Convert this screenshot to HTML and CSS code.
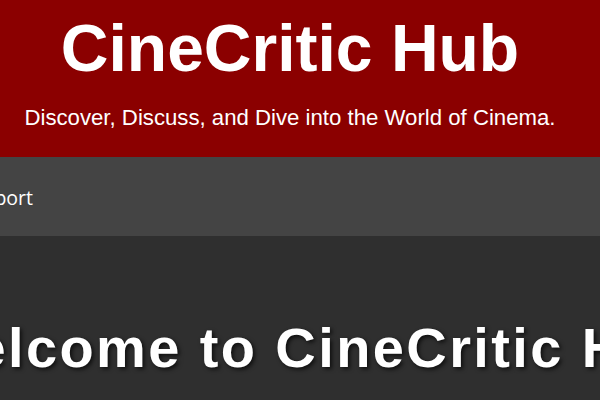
FILE: index.html
```html
<!DOCTYPE html>
<html lang="en">
<head>
<meta charset="utf-8">
<title>CineCritic Hub</title>
<link rel="stylesheet" href="styles.css">
</head>
<body>
<header class="site-header">
  <h1 class="site-title">CineCritic Hub</h1>
  <p class="site-tagline">Discover, Discuss, and Dive into the World of Cinema.</p>
</header>
<nav class="site-nav">
  <ul class="nav-list">
    <li><a class="nav-link" href="#">Home</a></li>
    <li><a class="nav-link" href="#">Reviews</a></li>
    <li><a class="nav-link" href="#">Top Rated</a></li>
    <li><a class="nav-link" href="#">Community</a></li>
    <li><a class="nav-link" href="#">Contact</a></li>
    <li><a class="nav-link" href="#">Support</a></li>
  </ul>
</nav>
<main class="main">
  <section class="hero">
    <h2 class="hero-title">Welcome to CineCritic Hub</h2>
  </section>
</main>
</body>
</html>
```
FILE: styles.css
```css
html, body {
  margin: 0;
  padding: 0;
  overflow: hidden;
}
body {
  background: #2f2f2f;
  color: #fff;
  font-family: "Liberation Sans", Arial, sans-serif;
  width: 600px;
  height: 400px;
}
.site-header {
  background: #8b0000;
  text-align: center;
  padding: 10px 20px 27px 0;
}
.site-title {
  margin: 0;
  font-size: 66px;
  line-height: 76px;
  font-weight: bold;
}
.site-tagline {
  margin: 20px 0 0;
  font-size: 22.2px;
  line-height: 24px;
}
.site-nav {
  background: #444444;
  height: 79px;
  display: flex;
  align-items: center;
}
.nav-list {
  list-style: none;
  margin: 0;
  padding: 2px 0 0;
  width: 33px;
  display: flex;
  justify-content: flex-end;
  gap: 30px;
  white-space: nowrap;
}
.nav-link {
  color: #fff;
  text-decoration: none;
  font-family: "Open Sans", "Noto Sans", sans-serif;
  font-size: 19.5px;
  line-height: 26px;
}
.main {
  padding: 40px 0;
}
.hero {
  display: flex;
  justify-content: center;
  padding-left: 18px;
}
.hero-title {
  margin: 39px 0 0;
  white-space: nowrap;
  font-size: 56px;
  letter-spacing: 2.4px;
  text-shadow: 2px 2px 4px rgba(0, 0, 0, 0.7);
}
```
